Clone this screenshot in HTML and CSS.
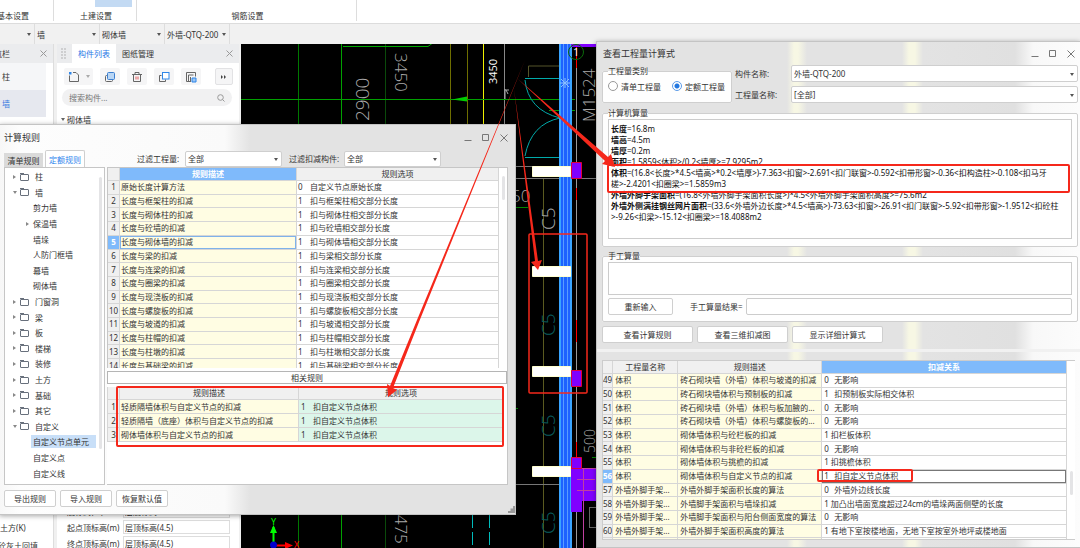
FILE: index.html
```html
<!DOCTYPE html>
<html lang="zh-CN">
<head>
    <meta charset="UTF-8">
    <meta name="viewport" content="width=device-width, initial-scale=1.0">
    <title>计算规则</title>
    <link rel="stylesheet" href="styles.css">
</head>
<body>
    <!-- Ribbon -->
    <header class="ribbon">
        <div class="ribbon-group group-basic">基本设置</div>
        <div class="ribbon-group group-civil"><span class="ribbon-chip"></span>土建设置</div>
        <div class="ribbon-group group-rebar">钢筋设置</div>
    </header>

    <nav class="toolbar">
        <span class="pick pick-floor"><select aria-label="楼层"><option></option></select></span>
        <span class="pick"><select aria-label="构件类别"><option>墙</option></select></span>
        <span class="pick"><select aria-label="构件类型"><option>砌体墙</option></select></span>
        <span class="pick"><select aria-label="构件"><option>外墙-QTQ-200</option></select></span>
    </nav>

    <main class="workspace">
        <aside class="side">
            <div class="panel-head side-head">
                <span class="side-title">导航栏</span>
                <button class="x-btn" aria-label="关闭"><svg width="7" height="7" viewBox="0 0 7 7"><path d="M.5.5l6 6M6.500.5l-6 6"/></svg></button>
            </div>
            <a class="side-item" href="#">柱</a>
            <a class="side-item current" href="#">墙</a>
            <div class="side-bottom">
                <a href="#">土方(K)</a>
                <a class="cut" href="#">砼灰土回填</a>
            </div>
        </aside>

        <section class="components">
            <div class="panel-head">
                <svg class="grip" width="5" height="11" viewBox="0 0 5 11"><path d="M1 .5v10M4 .5v10" stroke="#777" stroke-dasharray="1 2"/></svg>
                <button class="panel-tab active">构件列表</button>
                <button class="panel-tab">图纸管理</button>
                <button class="x-btn" aria-label="关闭"><svg width="7" height="7" viewBox="0 0 7 7"><path d="M.5.5l6 6M6.500.5l-6 6"/></svg></button>
            </div>
            <div class="tool-icons">
                <button class="new-btn" aria-label="新建">
                    <svg width="12" height="12" viewBox="0 0 12 12"><path d="M5 1.500h3l2.500 2.500v6.500h-9v-6" /><path d="M1 1h2.500v2.500h-2.500z" fill="#2f86e8" stroke="none"/></svg>
                    <i class="caret"></i>
                </button>
                <button aria-label="复制">
                    <svg width="12" height="12" viewBox="0 0 12 12"><rect x="1.500" y="4.500" width="7" height="6" rx="1"/><rect x="3.500" y="1.500" width="7" height="7" rx="1" fill="#b9d6f5" stroke="#3c7fd0"/></svg>
                </button>
                <button aria-label="删除">
                    <svg width="12" height="12" viewBox="0 0 12 12"><path d="M1 3.500h10M4 3.500v-2h4v2M2.500 3.500v7h7v-7"/><path d="M5 5.500v3M7 5.500v3" stroke="#e05a5a"/></svg>
                </button>
                <button aria-label="层间复制">
                    <svg width="12" height="12" viewBox="0 0 12 12"><path d="M3.500 4.500h-2v6h6v-2"/><rect x="4.500" y="1.500" width="6.500" height="6.500" fill="#fff" stroke="#2f86e8"/></svg>
                </button>
                <button aria-label="存档">
                    <svg width="12" height="12" viewBox="0 0 12 12"><path d="M6 10.500h-4.500v-9h9v4M3.500 10v-6h5M5.500 6v4"/><path d="M7 7h4v4h-4z" fill="#9cc6f5" stroke="#2f86e8"/></svg>
                </button>
                <button class="more-btn" aria-label="更多">
                    <svg width="6" height="4" viewBox="0 0 6 4"><path d="M0 0l2 2l-2 2zM3 0l2 2l-2 2z" fill="#444" stroke="none"/></svg>
                </button>
            </div>
            <label class="search">
                <input type="text" placeholder="搜索构件..." aria-label="搜索构件">
                <svg width="8" height="8" viewBox="0 0 8 8"><circle cx="3.500" cy="3.500" r="2.800"/><path d="M5.500 5.500l2 2"/></svg>
            </label>
            <div class="comp-group"><i class="caret"></i>砌体墙</div>
            <div class="props">
                <label for="p1">底标高(m)</label><input id="p1" type="text" value="层底标高">
                <label for="p2">起点顶标高(m)</label><input id="p2" type="text" value="层顶标高(4.5)">
                <label for="p3">终点顶标高(m)</label><input id="p3" type="text" value="层顶标高(4.5)">
            </div>
        </section>

        <!-- CAD canvas -->
        <svg class="cad" viewBox="241 44 839 504" preserveAspectRatio="xMinYMin slice">
            <g fill="none" stroke-width="1">
                <path d="M298.500 44v504" stroke="#007800"/>
                <path d="M341.500 44v504" stroke="#00a000"/>
                <path d="M385.500 44v504" stroke="#0a4a0a"/>
                <path d="M450.500 44v90M467.500 44v90" stroke="#6e6e00"/>
                <path d="M483.500 44v90" stroke="#f0f000"/>
                <path d="M504.500 44v90" stroke="#888"/>
                <path d="M343 46.500h85l4-3" stroke="#00a800"/>
                <path d="M241 99.500h334M549 110.500h26" stroke="#00a000"/>
                <path d="M506 90l2 4M505 89v10M505 90h4" stroke="#aaa"/>
                <path d="M528.500 77v-11h31" stroke="#55552a"/>
                <path d="M525 78.500h36M525 80q3 30 35 38q-29 6-35 38M525 157.500h38" stroke="#0aa"/>
                <path d="M543.500 178v370" stroke="#5a5a20"/>
                <path d="M516 178.500h80M516 484.500h80M516 166.500h18" stroke="#777"/>
                <path d="M516 207.500h12M592 457.500h4M515 408.500h3" stroke="#080"/>
                <path d="M472.500 515v33M489.500 515v33" stroke="#0bb" stroke-dasharray="13 4"/>
                <path d="M576.500 60v488" stroke="#999"/>
                <path d="M576.500 46v22M576.500 188v12M576.500 320v22M576.500 442v20" stroke="#f00"/>
            </g>
            <path d="M452 99.500l15-3v5z" fill="#0c0"/>

            <!-- wall -->
            <path d="M559 44h13v504h-13z" fill="#3aa5ff"/>
            <path d="M561 44h9v504h-9z" fill="#1d62ff"/>
            <path d="M563.500 44v504M567.500 44v504" stroke="#5b9dff" fill="none"/>
            <path d="M560 83h10M565 78v10M561 79l8 8M569 79l-8 8" stroke="#8cc0ff" fill="none"/>
            <g fill="#8000ff" stroke="#e0003c">
                <path d="M571 43h25v4h-25z" stroke="none"/>
                <path d="M571 468h25v33h-14v11h-11z" stroke="none"/>
                <path d="M571.500 162.500h10v16h-10z"/>
                <path d="M571.500 370.500h10v16h-10z"/>
                <path d="M571.500 457.500h10v11h-10z"/>
            </g>
            <path d="M577 479.500h18M577 490.500h18M582 468.500h14M583.500 468v80" stroke="#c040a0" fill="none"/>
            <path d="M589.500 507v20M589 507.500h7M589 527.500h7" stroke="#666" fill="none"/>
            <g fill="#fff" stroke="#ffffd0">
                <path d="M532.500 166.500h38v10h-38z"/>
                <path d="M532.500 266.500h38v10h-38z"/>
                <path d="M532.500 366.500h38v10h-38z"/>
                <path d="M532.500 466.500h38v10h-38z"/>
            </g>
            <circle cx="576" cy="52" r="7.500" fill="none" stroke="#0a6a0a"/>

            <g class="cad-text">
                <text transform="translate(395 53) rotate(90)" font-size="17">3450</text>
                <text transform="translate(369 121) rotate(-90)" font-size="19">2900</text>
                <text transform="translate(395 505) rotate(90)" font-size="17">3475</text>
                <text transform="translate(595 122) rotate(-90)" font-size="17">M1524</text>
                <text transform="translate(595 453) rotate(-90)" font-size="14">500</text>
                <text x="511" y="202" font-size="17">50</text>
                <text transform="translate(555 230) rotate(-90)" font-size="19">C5</text>
                <g class="teal">
                    <text transform="translate(555 336) rotate(-90)" font-size="19">C5</text>
                    <text transform="translate(555 437) rotate(-90)" font-size="19">C5</text>
                    <text transform="translate(555 534) rotate(-90)" font-size="19">C5</text>
                </g>
                <g class="white">
                    <text transform="translate(497 84) rotate(-90)" font-size="11">3450</text>
                    <text x="573" y="56" font-size="11">1</text>
                </g>
            </g>

            <path d="M273.500 545v-18" stroke="#0f0" stroke-width="2"/>
            <path d="M270 533l3.500-8l3.500 8z" fill="#0f0"/>
            <path d="M274 545.500h12" stroke="#f00" stroke-width="2"/>
            <path d="M285 542l8 3.500l-8 3.500z" fill="#f00"/>
            <circle cx="273.500" cy="545" r="3.500" fill="#00c"/>
            <text x="271" y="525" font-size="9" fill="#0f0">Y</text>
            <text x="294" y="548" font-size="9" fill="#f00">X</text>
        </svg>
    </main>

    <!-- Calculation rules window -->
    <section class="window rules">
        <div class="titlebar">
            <h1>计算规则</h1>
            <div class="win-btns">
                <button aria-label="最小化"><svg width="8" height="8" viewBox="0 0 8 8"><path d="M.5 6.500h7"/></svg></button>
                <button aria-label="最大化"><svg width="8" height="8" viewBox="0 0 8 8"><path d="M.5.5h6v6h-6z"/></svg></button>
                <button aria-label="关闭"><svg width="8" height="8" viewBox="0 0 8 8"><path d="M.5.5l7 7M7.500.5l-7 7"/></svg></button>
            </div>
        </div>
        <div class="rules-bar">
            <button class="tab">清单规则</button>
            <button class="tab active">定额规则</button>
            <label class="filter-a" for="filterQty">过滤工程量:</label>
            <span class="combo"><select id="filterQty"><option>全部</option></select></span>
            <label class="filter-b" for="filterComp">过滤扣减构件:</label>
            <span class="combo"><select id="filterComp"><option>全部</option></select></span>
        </div>
        <div class="rules-body">
            <div class="tree">
                <ul>
                    <li class="node"><i class="arrow"></i><i class="folder"></i>柱</li>
                    <li class="node"><i class="arrow open"></i><i class="folder"></i>墙</li>
                    <li class="leaf">剪力墙</li>
                    <li class="leaf"><i class="arrow"></i>保温墙</li>
                    <li class="leaf">墙垛</li>
                    <li class="leaf">人防门框墙</li>
                    <li class="leaf">幕墙</li>
                    <li class="leaf">砌体墙</li>
                    <li class="node"><i class="arrow"></i><i class="folder"></i>门窗洞</li>
                    <li class="node"><i class="arrow"></i><i class="folder"></i>梁</li>
                    <li class="node"><i class="arrow"></i><i class="folder"></i>板</li>
                    <li class="node"><i class="arrow"></i><i class="folder"></i>楼梯</li>
                    <li class="node"><i class="arrow"></i><i class="folder"></i>装修</li>
                    <li class="node"><i class="arrow"></i><i class="folder"></i>土方</li>
                    <li class="node"><i class="arrow"></i><i class="folder"></i>基础</li>
                    <li class="node"><i class="arrow"></i><i class="folder"></i>其它</li>
                    <li class="node"><i class="arrow open"></i><i class="folder"></i>自定义</li>
                    <li class="leaf"><span class="picked">自定义节点单元</span></li>
                    <li class="leaf">自定义点</li>
                    <li class="leaf">自定义线</li>
                </ul>
                <div class="thumb"></div>
            </div>
            <div class="rules-main">
                <div class="grid-wrap main-grid">
                    <table class="grid rule-table">
                        <colgroup><col class="c-num"><col class="c-desc"><col></colgroup>
                        <thead><tr><th></th><th class="hot">规则描述</th><th>规则选项</th></tr></thead>
                        <tbody>
                            <tr><th>1</th><td class="name">原始长度计算方法</td><td><b>0</b>自定义节点原始长度</td></tr>
                            <tr><th>2</th><td class="name">长度与框架柱的扣减</td><td><b>1</b>扣与框架柱相交部分长度</td></tr>
                            <tr><th>3</th><td class="name">长度与砌体柱的扣减</td><td><b>1</b>扣与砌体柱相交部分长度</td></tr>
                            <tr><th>4</th><td class="name">长度与砼墙的扣减</td><td><b>1</b>扣与砼墙相交部分长度</td></tr>
                            <tr><th class="hot">5</th><td class="name focus">长度与砌体墙的扣减</td><td><b>1</b>扣与砌体墙相交部分长度</td></tr>
                            <tr><th>6</th><td class="name">长度与梁的扣减</td><td><b>1</b>扣与梁相交部分长度</td></tr>
                            <tr><th>7</th><td class="name">长度与连梁的扣减</td><td><b>1</b>扣与连梁相交部分长度</td></tr>
                            <tr><th>8</th><td class="name">长度与圈梁的扣减</td><td><b>1</b>扣与圈梁相交部分长度</td></tr>
                            <tr><th>9</th><td class="name">长度与现浇板的扣减</td><td><b>1</b>扣与现浇板相交部分长度</td></tr>
                            <tr><th>10</th><td class="name">长度与螺旋板的扣减</td><td><b>1</b>扣与螺旋板相交部分长度</td></tr>
                            <tr><th>11</th><td class="name">长度与坡道的扣减</td><td><b>1</b>扣与坡道相交部分长度</td></tr>
                            <tr><th>12</th><td class="name">长度与柱帽的扣减</td><td><b>1</b>扣与柱帽相交部分长度</td></tr>
                            <tr><th>13</th><td class="name">长度与柱墩的扣减</td><td><b>1</b>扣与柱墩相交部分长度</td></tr>
                            <tr><th>14</th><td class="name">长度与基础梁的扣减</td><td><b>1</b>扣与基础梁相交部分长度</td></tr>
                        </tbody>
                    </table>
                    <div class="scroll"><div class="thumb"></div></div>
                </div>
                <div class="related">相关规则</div>
                <table class="grid related-table">
                    <colgroup><col class="c-num"><col class="c-desc2"><col></colgroup>
                    <thead><tr><th></th><th>规则描述</th><th>规则选项</th></tr></thead>
                    <tbody>
                        <tr><th>1</th><td class="name">轻质隔墙体积与自定义节点的扣减</td><td class="green"><b>1</b>扣自定义节点体积</td></tr>
                        <tr><th>2</th><td class="name">轻质隔墙（底座）体积与自定义节点的扣减</td><td class="green"><b>1</b>扣自定义节点体积</td></tr>
                        <tr><th>3</th><td class="name">砌体墙体积与自定义节点的扣减</td><td class="green"><b>1</b>扣自定义节点体积</td></tr>
                    </tbody>
                </table>
            </div>
        </div>
        <div class="rules-foot">
            <button class="btn">导出规则</button>
            <button class="btn">导入规则</button>
            <button class="btn">恢复默认值</button>
        </div>
        <svg class="resize" width="7" height="7" viewBox="0 0 7 7"><path d="M5 0h2v7h-7v-2h2.500v-2.500h2.500z" fill="#999"/></svg>
    </section>

    <!-- Formula window -->
    <section class="window formula">
        <div class="titlebar">
            <h1>查看工程量计算式</h1>
            <div class="win-btns">
                <button aria-label="最小化"><svg width="8" height="8" viewBox="0 0 8 8"><path d="M.5 6.500h7"/></svg></button>
                <button aria-label="最大化"><svg width="8" height="8" viewBox="0 0 8 8"><path d="M.5.5h6v6h-6z"/></svg></button>
                <button aria-label="关闭"><svg width="8" height="8" viewBox="0 0 8 8"><path d="M.5.5l7 7M7.500.5l-7 7"/></svg></button>
            </div>
        </div>
        <div class="formula-top">
            <fieldset class="kinds">
                <legend>工程量类别</legend>
                <label><input type="radio" name="kind">清单工程量</label>
                <label><input type="radio" name="kind" checked>定额工程量</label>
            </fieldset>
            <div class="names">
                <label for="compName">构件名称:</label>
                <span class="combo"><select id="compName"><option>外墙-QTQ-200</option></select></span>
                <label for="qtyName">工程量名称:</label>
                <span class="combo"><select id="qtyName"><option>[全部]</option></select></span>
            </div>
        </div>
        <fieldset class="auto">
            <legend>计算机算量</legend>
            <div class="result">
                <p><b>长度</b>=16.8m</p>
                <p><b>墙高</b>=4.5m</p>
                <p><b>墙厚</b>=0.2m</p>
                <p><b>面积</b>=1.5859&lt;体积&gt;/0.2&lt;墙厚&gt;=7.9295m2</p>
                <p><b>体积</b>=(16.8&lt;长度&gt;*4.5&lt;墙高&gt;*0.2&lt;墙厚&gt;)-7.363&lt;扣窗&gt;-2.691&lt;扣门联窗&gt;-0.592&lt;扣带形窗&gt;-0.36&lt;扣构造柱&gt;-0.108&lt;扣马牙<br>槎&gt;-2.4201&lt;扣圈梁&gt;=1.5859m3</p>
                <p><b>外墙外脚手架面积</b>=(16.8&lt;外墙外脚手架面积长度&gt;)*4.5&lt;外墙外脚手架面积高度&gt;=75.6m2</p>
                <p><b>外墙外侧满挂钢丝网片面积</b>=(33.6&lt;外墙外边长度&gt;*4.5&lt;墙高&gt;)-73.63&lt;扣窗&gt;-26.91&lt;扣门联窗&gt;-5.92&lt;扣带形窗&gt;-1.9512&lt;扣砼柱<br>&gt;-9.26&lt;扣梁&gt;-15.12&lt;扣圈梁&gt;=18.4088m2</p>
            </div>
        </fieldset>
        <fieldset class="manual">
            <legend>手工算量</legend>
            <textarea aria-label="手工算量"></textarea>
            <div class="manual-row">
                <button class="btn">重新输入</button>
                <label for="manualResult">手工算量结果=</label>
                <input id="manualResult" type="text">
            </div>
        </fieldset>
        <div class="formula-btns">
            <button class="btn">查看计算规则</button>
            <button class="btn">查看三维扣减图</button>
            <button class="btn">显示详细计算式</button>
        </div>
        <div class="splitter"></div>
        <div class="grid-wrap deduct-grid">
            <table class="grid deduct-table">
                <colgroup><col class="d-num"><col class="d-qty"><col class="d-desc"><col></colgroup>
                <thead><tr><th></th><th>工程量名称</th><th>规则描述</th><th class="hot">扣减关系</th></tr></thead>
                <tbody>
                    <tr><th>49</th><td class="name">体积</td><td class="name">砖石砌块墙（外墙）体积与坡道的扣减</td><td><b>0</b>无影响</td></tr>
                    <tr><th>50</th><td class="name">体积</td><td class="name">砖石砌块墙体积与预制板的扣减</td><td><b>1</b>扣预制板实际相交体积</td></tr>
                    <tr><th>51</th><td class="name">体积</td><td class="name">砖石砌块墙（外墙）体积与板加腋的...</td><td><b>0</b>无影响</td></tr>
                    <tr><th>52</th><td class="name">体积</td><td class="name">砖石砌块墙（外墙）体积与螺旋板的...</td><td><b>0</b>无影响</td></tr>
                    <tr><th>53</th><td class="name">体积</td><td class="name">砌体墙体积与砼栏板的扣减</td><td>1 扣栏板体积</td></tr>
                    <tr><th>54</th><td class="name">体积</td><td class="name">砌体墙体积与非砼栏板的扣减</td><td><b>0</b>无影响</td></tr>
                    <tr><th>55</th><td class="name">体积</td><td class="name">砌体墙体积与挑檐的扣减</td><td>1 扣挑檐体积</td></tr>
                    <tr><th class="hot">56</th><td class="name">体积</td><td class="name">砌体墙体积与自定义节点的扣减</td><td class="focus"><b>1</b>扣自定义节点体积</td></tr>
                    <tr><th>57</th><td class="name">外墙外脚手架...</td><td class="name">外墙外脚手架面积长度的算法</td><td><b>0</b>外墙外边线长度</td></tr>
                    <tr><th>58</th><td class="name">外墙外脚手架...</td><td class="name">外墙脚手架面积与墙垛扣减</td><td>1 加凸出墙面宽度超过24cm的墙垛两面侧壁的长度</td></tr>
                    <tr><th>59</th><td class="name">外墙外脚手架...</td><td class="name">外墙脚手架面积与阳台侧面宽度的算法</td><td><b>0</b>无影响</td></tr>
                    <tr><th>60</th><td class="name">外墙外脚手架...</td><td class="name">外墙外脚手架面积高度的算法</td><td>1 有地下室按楼地面，无地下室按室外地坪或楼地面</td></tr>
                    <tr><th></th><td class="name"></td><td class="name"></td><td></td></tr>
                </tbody>
            </table>
            <div class="scroll"><div class="thumb"></div></div>
        </div>
    </section>

    <!-- Red marks over both windows -->
    <svg class="marks" width="1080" height="548" viewBox="0 0 1080 548">
        <g fill="none" stroke="#f5281b" stroke-width="2">
            <rect x="608" y="165" width="461" height="27" rx="1"/>
            <rect x="117" y="387" width="386" height="59" rx="1"/>
            <rect x="818" y="470" width="94" height="11" rx="1"/>
            <rect x="529" y="234" width="58" height="159" rx="1" stroke-width="1.500"/>
        </g>
        <g fill="#f5281b">
            <path d="M525 60l-106 262l-26 66l4 2l-9 7l-1-13l3 2l27-66z"/>
            <path d="M518 79l90 78l3-3l4 13l-13-3l3-3z"/>
            <path d="M514 89l24 172l4-1l-4 10l-7-8l4-1z"/>
        </g>
    </svg>
</body>
</html>
```

FILE: styles.css
```css
/* General Styles */
* {
    box-sizing: border-box;
}

body {
    font-family: "Noto Sans", "Noto Sans CJK SC", sans-serif;
    font-size: 8px;
    line-height: 11px;
    color: #333;
    margin: 0;
    height: 100vh;
    overflow: hidden;
    position: relative;
    display: flex;
    flex-direction: column;
    background: #fff;
}

button, input, select, textarea {
    font: inherit;
    color: inherit;
    margin: 0;
    padding: 0;
    border: none;
    background: none;
    border-radius: 0;
    outline: none;
}

button {
    cursor: pointer;
    white-space: nowrap;
}

select {
    appearance: none;
    width: 100%;
    height: 100%;
}

a {
    color: inherit;
    text-decoration: none;
}

svg {
    flex: none;
}

button svg, .search svg {
    fill: none;
    stroke: #666;
    display: block;
}

.caret {
    border: 2px solid transparent;
    border-top: 3px solid #666;
    border-bottom: 0;
}

/* Ribbon */
.ribbon {
    display: flex;
    flex: none;
    height: 24px;
    border-bottom: 1px solid #dcdcdc;
}

.ribbon-group {
    position: relative;
    height: 21px;
    padding-top: 10px;
    border-right: 1px solid #ddd;
    text-align: center;
    white-space: nowrap;
}

.group-basic {
    width: 54px;
    text-align: left;
    text-indent: -3px;
}

.group-civil {
    width: 83px;
    padding-left: 2px;
}

.group-rebar {
    width: 220px;
    padding-left: 2px;
}

.ribbon-chip {
    position: absolute;
    top: 0;
    right: 4px;
    width: 37px;
    height: 7px;
    background: #c3daf3;
}

.toolbar {
    display: flex;
    flex: none;
    height: 20px;
    background: #f1f1f1;
}

.pick {
    position: relative;
    width: 65px;
    height: 20px;
    padding-left: 2px;
    border-right: 1px solid #ddd;
}

.pick-floor {
    width: 35px;
}

.pick::after, .combo::after {
    content: "";
    position: absolute;
    right: 3px;
    top: 50%;
    margin-top: -1px;
    border: 2px solid transparent;
    border-top: 3px solid #555;
    border-bottom: 0;
}

/* Workspace */
.workspace {
    flex: 1;
    min-height: 0;
    display: flex;
    background: #f0f0f0;
}

.panel-head {
    display: flex;
    align-items: center;
    flex: none;
    height: 19px;
    background: #ebecee;
}

.x-btn {
    margin-left: auto;
    margin-right: 6px;
}

.x-btn svg {
    stroke: #999;
}

.side {
    width: 54px;
    display: flex;
    flex-direction: column;
    background: #fff;
    border-right: 1px solid #ddd;
    overflow: hidden;
}

.side-title {
    margin-left: -14px;
}

.side-item {
    width: 46px;
    height: 27px;
    padding: 8px 2px;
    background: #f5f6f8;
}

.side-item.current {
    background: #e6e8ef;
    color: #3b7be0;
}

.side-bottom {
    margin-top: auto;
    height: 26px;
    display: grid;
    grid-auto-rows: 18px;
    white-space: nowrap;
}

.side-bottom .cut {
    margin-left: -2px;
}

.components {
    width: 182px;
    margin: 0 2px 0 3px;
    display: flex;
    flex-direction: column;
    background: #fff;
    overflow: hidden;
}

.grip {
    margin: 0 6px 0 4px;
}

.panel-tab {
    height: 19px;
    padding: 0 6px;
}

.panel-tab.active {
    background: #fff;
    color: #1f78e6;
}

.tool-icons {
    display: flex;
    gap: 7px;
    padding: 5px 6px 4px 7px;
}

.tool-icons button {
    display: flex;
    align-items: center;
    justify-content: center;
    width: 20px;
    height: 17px;
    border-radius: 2px;
    background: #f5f5f6;
}

.tool-icons .new-btn {
    width: 29px;
    justify-content: space-between;
    padding: 0 3px 0 4px;
}

.new-btn .caret {
    border-top-color: #aaa;
}

.tool-icons .more-btn {
    width: 18px;
    margin-left: auto;
    border: 1px solid #e2e2e4;
}

.search {
    display: flex;
    align-items: center;
    height: 17px;
    margin: 0 7px 0 5px;
    padding: 0 7px;
    border-radius: 9px;
    background: #f1f1f2;
}

.search input {
    flex: 1;
    min-width: 0;
}

.search input::placeholder {
    color: #777;
}

.search svg {
    stroke: #999;
}

.comp-group {
    display: flex;
    align-items: center;
    gap: 2px;
    padding: 8px 4px;
}

.props {
    flex: none;
    margin-top: auto;
    margin-bottom: -2px;
    display: grid;
    grid-template-columns: 50px 1fr;
    column-gap: 6px;
    row-gap: 2px;
    padding: 0 9px 0 10px;
    align-items: center;
    white-space: nowrap;
}

.props input {
    height: 14px;
    padding-left: 1px;
    border: 1px solid #ddd;
    min-width: 0;
}

.cad {
    flex: 1;
    min-width: 0;
    height: 100%;
    background: #000;
}

.cad-text {
    fill: #aaa;
    font-family: "Open Sans", sans-serif;
    font-weight: 300;
}

.cad-text .teal {
    fill: #0a6060;
}

.cad-text .white {
    fill: #fff;
    font-weight: 400;
}

/* Floating windows */
.window {
    position: absolute;
    display: flex;
    flex-direction: column;
    border: 1px solid #c4c4c4;
    box-shadow: 0 1px 5px rgba(0, 0, 0, 0.35);
}

.titlebar {
    display: flex;
    align-items: center;
    justify-content: space-between;
    flex: none;
}

h1 {
    margin: 0;
    font-size: 9px;
    font-weight: normal;
}

.win-btns {
    display: flex;
    gap: 10px;
}

.win-btns svg {
    stroke: #777;
}

.combo {
    position: relative;
    height: 17px;
    padding: 0 2px;
    border: 1px solid #cfcfcf;
    border-radius: 2px;
    background: #fff;
}

.btn {
    height: 17px;
    border: 1px solid #cfcfcf;
    border-radius: 2px;
    background: #fff;
}

.thumb {
    background: #e4e4e6;
    border-radius: 2px;
}

/* Data grids */
.grid-wrap {
    display: flex;
    align-items: flex-start;
    overflow: hidden;
    background: #fff;
}

.grid {
    flex: 1;
    min-width: 0;
    table-layout: fixed;
    border-collapse: separate;
    border-spacing: 0;
    white-space: nowrap;
}

.grid th, .grid td {
    height: 13px;
    padding: 0 0 0 1px;
    line-height: 10px;
    text-align: left;
    font-weight: normal;
    border-right: 1px solid #d6d6d6;
    border-bottom: 1px solid #d6d6d6;
    overflow: hidden;
}

.grid th {
    background: #f0f0f0;
    padding: 0;
    text-align: center;
}

.grid .name {
    background: #fffde3;
}

.grid .hot {
    background: #7fbafb;
    color: #fff;
    font-weight: bold;
}

.grid .green {
    background: #dcf6ea;
    padding-left: 2px;
}

.grid td b {
    display: inline-block;
    width: 12px;
    font-weight: normal;
}

.c-num {
    width: 12px;
}

.c-desc {
    width: 177px;
}

.c-desc2 {
    width: 179px;
}

.scroll {
    width: 8px;
    align-self: stretch;
}

.scroll .thumb {
    width: 3px;
    margin: 8px auto;
    height: 24px;
}

/* Calculation rules */
.rules {
    left: -1px;
    top: 124px;
    width: 517px;
    height: 391px;
    padding: 0 7px 0 4px;
    background: linear-gradient(90deg, #f7f7f7 0, #fdfdfd 20px, #fafafa 225px, #e3e3e3 250px, #e3e3e3 100%);
}

.rules .titlebar {
    height: 25px;
}

.rules-bar {
    display: flex;
    align-items: center;
    height: 17px;
}

.tab {
    width: 39px;
    height: 14px;
    margin-top: 3px;
    background: #dadada;
}

.tab.active {
    width: 40px;
    height: 17px;
    margin: 0 0 0 2px;
    border: 1px solid #cfcfcf;
    border-bottom: none;
    border-radius: 2px 2px 0 0;
    background: #fff;
    color: #2f86ee;
}

.rules-bar .combo {
    width: 97px;
    height: 16px;
}

.filter-a {
    width: 48px;
    margin-left: 52px;
}

.filter-b {
    width: 55px;
    margin-left: 7px;
    white-space: nowrap;
}

.rules-body {
    flex: 1;
    min-height: 0;
    display: flex;
    gap: 2px;
}

.tree {
    width: 101px;
    display: flex;
    justify-content: space-between;
    padding: 1px 2px 3px 0;
    border: 1px solid #c6c6c6;
    background: #fff;
}

.tree ul {
    width: 94px;
    height: 312px;
    margin: 0;
    padding: 0;
    list-style: none;
    display: grid;
    grid-auto-rows: 1fr;
    white-space: nowrap;
}

.tree li {
    display: flex;
    align-items: center;
}

.node {
    padding-left: 8px;
}

.leaf {
    position: relative;
    padding-left: 28px;
}

.leaf .arrow {
    position: absolute;
    left: 21px;
}

.tree .thumb {
    width: 3px;
    height: 272px;
    margin-top: 8px;
}

.arrow {
    width: 3px;
    border: 2px solid transparent;
    border-left: 3px solid #888;
    border-right: 0;
}

.arrow.open {
    width: 4px;
    border: 2px solid transparent;
    border-top: 3px solid #888;
    border-bottom: 0;
    margin-right: -1px;
}

.folder {
    position: relative;
    width: 9px;
    height: 7px;
    margin: 1px 6px 0 4px;
    border: 1px solid #68707c;
    border-radius: 1px;
}

.folder::before {
    content: "";
    position: absolute;
    left: -1px;
    top: -2px;
    width: 4px;
    height: 1px;
    background: #68707c;
}

.picked {
    width: 65px;
    margin-left: -2px;
    padding: 1px 2px;
    background: #c8dff8;
}

.rules-main {
    flex: 1;
    min-width: 0;
    display: flex;
    flex-direction: column;
    border: 1px solid #c6c6c6;
    border-left: none;
    background: #fff;
}

.main-grid {
    height: 200px;
    border-left: 1px solid #c6c6c6;
}

.rule-table {
    height: 205px;
}

.related {
    height: 13px;
    margin-top: 3px;
    border: 1px solid #b5b5b5;
    text-align: center;
}

.related-table {
    flex: none;
    width: 397px;
    height: 55px;
    margin-top: 3px;
    border-left: 1px solid #d6d6d6;
}

.rules-foot {
    display: flex;
    gap: 4px;
    padding: 5px 0 7px;
}

.rules-foot .btn {
    width: 52px;
}

.resize {
    position: absolute;
    right: 0;
    bottom: 1px;
}

/* Formula window */
.formula {
    right: 0;
    top: 41px;
    bottom: 0;
    width: 484px;
    padding: 0 2px 0 5px;
    border-right: none;
    background: linear-gradient(90deg, #e3e3e3 0, #e3e3e3 190px, #f7f7e4 197px, #f7f7e4 201px, #e3e3e3 210px, #e3e3e3 305px, #f7f7e4 312px, #f7f7e4 318px, #e3e3e3 326px, #e0e0e0 418px, #f8f8f8 436px, #fcfcfc 100%);
}

.formula .titlebar {
    height: 23px;
    padding: 0 3px 0 1px;
}

fieldset {
    min-width: 0;
    margin: 0;
    padding: 1px 5px 0;
    border: 1px solid #cfcfcf;
    border-radius: 2px;
    background: #fefefe;
}

legend {
    height: 10px;
    line-height: 10px;
    padding: 0;
}

.formula-top {
    display: flex;
    gap: 3px;
    height: 38px;
}

.kinds {
    width: 130px;
    height: 37px;
    margin-top: 1px;
    display: flex;
    gap: 11px;
    white-space: nowrap;
}

.kinds label {
    display: flex;
    align-items: center;
    gap: 3px;
    height: 18px;
}

.kinds input {
    appearance: none;
    width: 10px;
    height: 10px;
    border: 1px solid #999;
    border-radius: 50%;
    background: #fff;
}

.kinds input:checked {
    border-color: #5b9be8;
    background: radial-gradient(circle, #2277e0 0, #2277e0 2px, #fff 3px);
}

.names {
    flex: 1;
    display: grid;
    grid-template-columns: 53px 1fr;
    column-gap: 3px;
    row-gap: 4px;
    align-items: center;
}

.auto {
    height: 139px;
    margin-top: 5px;
}

.result {
    height: 120px;
    padding: 3px 2px;
    border: 1px solid #ccc;
    background: #fff;
    color: #111;
    white-space: nowrap;
}

.result p {
    margin: 0;
}

.manual {
    height: 71px;
    margin-top: 4px;
}

.manual textarea {
    display: block;
    width: 100%;
    height: 33px;
    border: 1px solid #ccc;
    background: #fff;
    resize: none;
}

.manual-row {
    display: flex;
    align-items: center;
    margin-top: 3px;
}

.manual-row .btn {
    width: 65px;
}

.manual-row label {
    width: 56px;
    margin-left: 17px;
    white-space: nowrap;
}

.manual-row input {
    flex: 1;
    height: 17px;
    border: 1px solid #ccc;
    border-radius: 2px;
    background: #fff;
}

.formula-btns {
    display: flex;
    gap: 4px;
    margin-top: 4px;
}

.formula-btns .btn {
    width: 91px;
}

.splitter {
    height: 3px;
    margin: 6px -2px 8px -5px;
    background: #f1f1f1;
}

.deduct-grid {
    flex: 1;
    min-height: 0;
    margin: 0 3px 7px 0;
    border: 1px solid #ccc;
    border-right: none;
}

.deduct-table {
    height: 191px;
}

.deduct-table td {
    padding-left: 2px;
}

.deduct-table td b {
    width: 10px;
}

.d-num {
    width: 9px;
}

.d-qty {
    width: 65px;
}

.d-desc {
    width: 144px;
}

.rule-table .focus {
    box-shadow: inset 0 0 0 1px #7fb2ea;
}

.deduct-table .focus {
    box-shadow: inset 0 0 0 1px #777;
}

.deduct-grid .thumb {
    margin-top: 110px;
}

.marks {
    position: absolute;
    left: 0;
    top: 0;
    pointer-events: none;
}
```
